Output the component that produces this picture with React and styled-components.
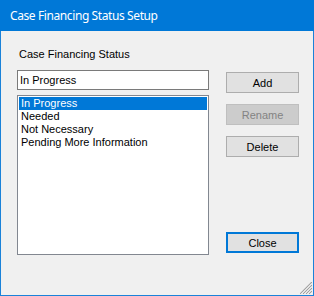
import React, { useState } from "react";
import styled, { createGlobalStyle } from "styled-components";

const Global = createGlobalStyle`
  html, body { margin: 0; padding: 0; background: #f0f0f0; }
  body { font-family: "Liberation Sans", Arial, sans-serif; font-size: 11px; }
  * { box-sizing: border-box; }
`;

const Window = styled.div`
  position: relative;
  width: 314px;
  height: 296px;
  border: 1px solid #1a82d9;
  border-top: none;
  background: #f0f0f0;
  display: flex;
  flex-direction: column;
`;

const TitleBar = styled.div`
  height: 31px;
  margin: 0 -1px;
  background: #0078d7;
  color: #ffffff;
  font-family: "Noto Sans", "Open Sans", sans-serif;
  font-size: 12px;
  letter-spacing: -0.4px;
  display: flex;
  align-items: center;
  padding-left: 10px;
  padding-bottom: 1px;
`;

const Body = styled.div`
  flex: 1;
  display: grid;
  grid-template-columns: 192px 73px;
  grid-template-rows: auto auto;
  align-content: start;
  column-gap: 17px;
  row-gap: 9px;
  padding: 17px 0 0 16px;
`;

const Label = styled.div`
  grid-column: 1 / span 2;
  line-height: 13px;
  padding-left: 2px;
  color: #000;
`;

const LeftCol = styled.div`
  display: flex;
  flex-direction: column;
  gap: 5px;
`;

const TextInput = styled.input`
  height: 20px;
  width: 192px;
  border: 1px solid #7a7a7a;
  background: #fff;
  font-family: "Liberation Sans", Arial, sans-serif;
  font-size: 11px;
  padding: 0 0 0 2px;
  margin: 0;
  outline: none;
  color: #000;
`;

const ListBox = styled.div`
  height: 160px;
  border: 1px solid #828790;
  background: #fff;
  padding: 1px;
  display: flex;
  flex-direction: column;
`;

const Item = styled.div`
  height: 13px;
  line-height: 13px;
  padding-left: 2px;
  white-space: nowrap;
  color: ${(p) => (p.$selected ? "#ffffff" : "#000000")};
  background: ${(p) => (p.$selected ? "#0078d7" : "transparent")};
  cursor: default;
`;

const RightCol = styled.div`
  display: flex;
  flex-direction: column;
  gap: 11px;
  padding-top: 2px;
  padding-bottom: 2px;
`;

const Button = styled.button`
  width: 73px;
  height: 21px;
  margin: 0;
  padding: 0;
  font-family: "Liberation Sans", Arial, sans-serif;
  font-size: 11px;
  color: ${(p) => (p.disabled ? "#838383" : "#000")};
  background: ${(p) => (p.disabled ? "#cccccc" : "#e1e1e1")};
  border: ${(p) =>
    p.$focused ? "2px solid #0078d7" : p.disabled ? "1px solid #bfbfbf" : "1px solid #adadad"};
  margin-top: ${(p) => (p.$pushDown ? "auto" : "0")};
  outline: none;
`;

const Grip = styled.svg`
  position: absolute;
  right: 1px;
  bottom: 1px;
`;

const items = ["In Progress", "Needed", "Not Necessary", "Pending More Information"];

export default function App() {
  const [sel, setSel] = useState(0);
  return (
    <>
      <Global />
      <Window>
        <TitleBar>Case Financing Status Setup</TitleBar>
        <Body>
          <Label>Case Financing Status</Label>
          <LeftCol>
            <TextInput value={items[sel]} readOnly />
            <ListBox>
              {items.map((t, i) => (
                <Item key={t} $selected={i === sel} onClick={() => setSel(i)}>
                  {t}
                </Item>
              ))}
            </ListBox>
          </LeftCol>
          <RightCol>
            <Button>Add</Button>
            <Button disabled>Rename</Button>
            <Button>Delete</Button>
            <Button $focused $pushDown>Close</Button>
          </RightCol>
        </Body>
        <Grip width="12" height="12" viewBox="0 0 12 12">
          {[0, 3, 6, 9].map((o) => (
            <line key={o} x1={12} y1={o} x2={o} y2={12} stroke="#a0a0a0" strokeWidth="1.2" />
          ))}
          {[1.5, 4.5, 7.5, 10.5].map((o) => (
            <line key={o} x1={12} y1={o} x2={o} y2={12} stroke="#ffffff" strokeWidth="0.8" />
          ))}
        </Grip>
      </Window>
    </>
  );
}
